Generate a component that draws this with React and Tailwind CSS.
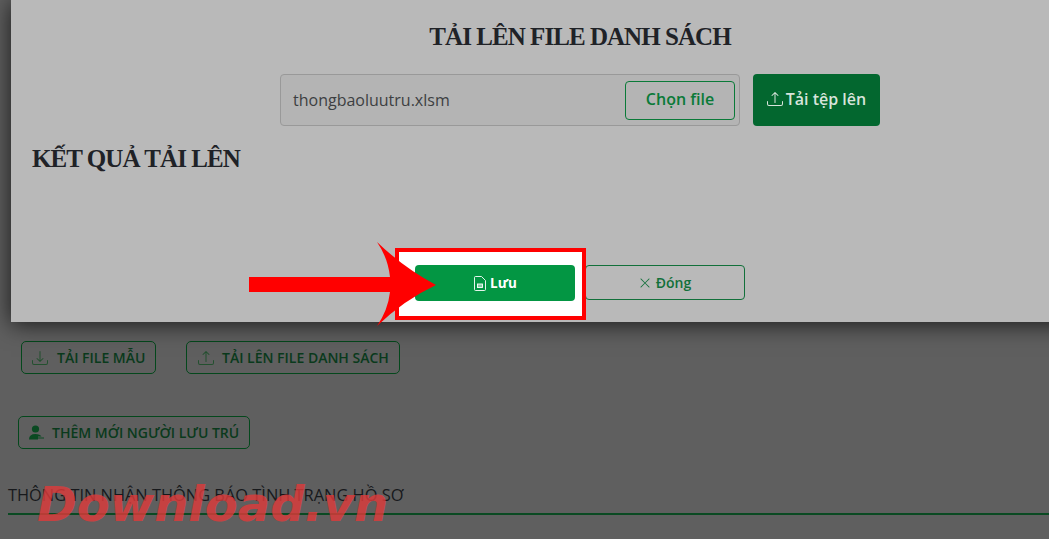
import { BsDownload, BsUpload, BsXLg } from "react-icons/bs";

function SaveIcon() {
  return (
    <svg width="13" height="15" viewBox="0 0 13 15" fill="none" stroke="currentColor" strokeWidth="0.9">
      <path d="M1.5 1.5 Q1.5 .5 2.5 .5 H8.5 L12.5 4.5 V13.5 Q12.5 14.5 11.5 14.5 H2.5 Q1.5 14.5 1.5 13.5 Z" />
      <rect x="4.5" y="8" width="5" height="3.5" fill="currentColor" fillOpacity="0.5" />
    </svg>
  );
}

function PersonIcon() {
  return (
    <svg className="mr-[8px]" width="15" height="15" viewBox="0 0 15 15" fill="#0a4a22">
      <circle cx="6.5" cy="4" r="3.6" />
      <path d="M0 14.5 Q0 9 6.5 9 Q11 9 12.5 11.5 H9 V12.5 H15 V13.5 H9 V14.5 Z" />
    </svg>
  );
}

function OutlineButton({ icon, children, className }) {
  return (
    <button className={`flex items-center rounded-[5px] border border-[#04481c] text-[14px] font-semibold text-[#0a3a1c] ${className}`}>
      {icon}
      {children}
    </button>
  );
}

function Modal() {
  return (
    <div className="absolute left-[11px] top-0 flex h-[322px] w-[1138px] flex-col items-center bg-[#b9b9b9] shadow-[0_2px_22px_rgba(0,0,0,0.75)]">
      <h2 className="mt-[20px] font-['Liberation_Serif',serif] text-[25px] leading-[34px] font-bold tracking-[-0.95px] text-[#202227]">
        TẢI LÊN FILE DANH SÁCH
      </h2>
      <div className="mt-[20px] flex gap-[13px]">
        <div className="flex h-[52px] w-[460px] items-center justify-between rounded-[4px] border border-[#999999] bg-[#b4b4b4] pr-[4px] pl-[12px]">
          <span className="text-[16px] text-[#3d3f42]">thongbaoluutru.xlsm</span>
          <button className="h-[39px] w-[110px] rounded-[4px] border border-[#0a7a38] pb-[2px] text-[16px] font-semibold text-[#0a7a38]">
            Chọn file
          </button>
        </div>
        <button className="flex h-[52px] w-[127px] items-center justify-center gap-[3px] rounded-[4px] bg-[#03672f] pb-[2px] text-[16px] font-semibold text-[#d8e4dc]">
          <BsUpload className="text-[16px]" />
          Tải tệp lên
        </button>
      </div>
      <h3 className="mt-[16px] self-start pl-[21px] font-['Liberation_Serif',serif] text-[25px] leading-[34px] font-bold tracking-[-0.95px] text-[#202227]">
        KẾT QUẢ TẢI LÊN
      </h3>
      <div className="mt-[89px] flex items-start gap-[10px]">
        <div className="relative">
          {/* red frame from the annotated screenshot */}
          <div className="absolute -left-[20px] -top-[17px] h-[72px] w-[191px] border-[4px] border-[#ff0000] bg-white" />
          <button className="relative flex h-[36px] w-[160px] items-center justify-center gap-[4px] rounded-[4px] bg-[#039643] text-[13.5px] font-bold text-white">
            <SaveIcon />
            Lưu
          </button>
        </div>
        <button className="flex h-[35px] w-[160px] items-center justify-center gap-[5px] rounded-[4px] border border-[#12703a] text-[14px] font-semibold text-[#12703a]">
          <BsXLg className="text-[12px]" />
          Đóng
        </button>
      </div>
    </div>
  );
}

export default function App() {
  return (
    <div className="relative h-[539px] w-[1049px] overflow-hidden bg-[#5f5f5f] font-['Open_Sans',sans-serif]">
      <div className="flex flex-col pt-[341px]">
        <div className="flex gap-[30px] pl-[21px]">
          <OutlineButton className="h-[33px] w-[135px] pl-[10px]" icon={<BsDownload className="mr-[9px] text-[16px] text-[#23502f]" />}>
            TẢI FILE MẪU
          </OutlineButton>
          <OutlineButton className="h-[33px] w-[214px] pl-[11px]" icon={<BsUpload className="mr-[8px] text-[16px] text-[#23502f]" />}>
            TẢI LÊN FILE DANH SÁCH
          </OutlineButton>
        </div>
        <OutlineButton className="mt-[42px] ml-[18px] h-[33px] w-[232px] pl-[10px]" icon={<PersonIcon />}>
          THÊM MỚI NGƯỜI LƯU TRÚ
        </OutlineButton>
        <div className="mt-[34px] ml-[8px] border-b-2 border-[#0a4a22] pb-[6px] text-[16.4px] leading-[24px] text-[#17191c]">
          THÔNG TIN NHẬN THÔNG BÁO TÌNH TRẠNG HỒ SƠ
        </div>
      </div>
      <div className="absolute left-[37px] top-[478px] font-['DejaVu_Sans',sans-serif] text-[48px] leading-[52px] font-bold text-[#e03a3a] italic opacity-80">
        Download.vn
      </div>
      <Modal />
      <svg className="absolute left-0 top-0" width="1049" height="539">
        <path
          d="M249 277 H390 Q388 258 377 242 Q404 268 436 285 Q404 300 377 326 Q388 310 390 292 H249 Z"
          fill="#ff0000"
        />
      </svg>
    </div>
  );
}
